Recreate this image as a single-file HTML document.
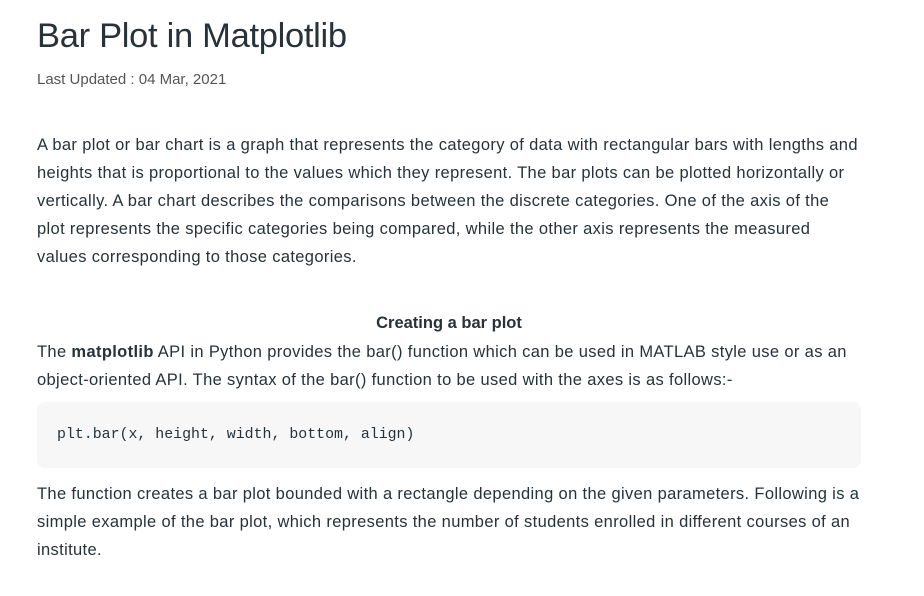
<!DOCTYPE html>
<html><head><meta charset="utf-8"><style>
html,body{margin:0;padding:0;background:#fff;width:924px;height:596px;overflow:hidden}
body{font-family:"Liberation Sans",sans-serif;color:#273239;position:relative}
.a{position:absolute;white-space:nowrap}
h1{position:absolute;left:37px;top:17px;margin:0;font-size:34.5px;font-weight:normal;letter-spacing:-0.3px;color:#273239}
.d{left:37px;top:71px;font-size:15px;color:#555}
.p{left:37px;font-size:16.5px;letter-spacing:0.35px;line-height:28px;color:#273239}
.code{position:absolute;left:37px;top:402px;width:824px;height:66px;background:#f7f7f7;border-radius:8px}
.code span{position:absolute;left:20px;top:25px;font-family:"Liberation Mono",monospace;font-size:14.9px;color:#273239;white-space:nowrap}
</style></head><body>
<h1>Bar Plot in Matplotlib</h1>
<div class="a d">Last Updated : 04 Mar, 2021</div>
<div class="a p" style="top:131px">A bar plot or bar chart is a graph that represents the category of data with rectangular bars with lengths and<br>heights that is proportional to the values which they represent. The bar plots can be plotted horizontally or<br>vertically. A bar chart describes the comparisons between the discrete categories. One of the axis of the<br>plot represents the specific categories being compared, while the other axis represents the measured<br>values corresponding to those categories.</div>
<div class="a p" style="top:309px;left:0;width:898px;text-align:center;font-weight:bold;letter-spacing:0">Creating a bar plot</div>
<div class="a p" style="top:338px">The <b>matplotlib</b> API in Python provides the bar() function which can be used in MATLAB style use or as an<br>object-oriented API. The syntax of the bar() function to be used with the axes is as follows:-</div>
<div class="code"><span>plt.bar(x, height, width, bottom, align)</span></div>
<div class="a p" style="top:480px">The function creates a bar plot bounded with a rectangle depending on the given parameters. Following is a<br>simple example of the bar plot, which represents the number of students enrolled in different courses of an<br>institute.</div>
</body></html>
